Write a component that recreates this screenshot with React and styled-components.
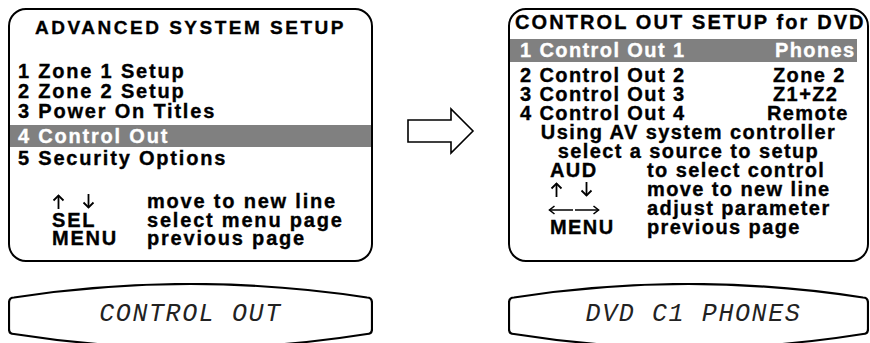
import React from "react";
import styled, { createGlobalStyle } from "styled-components";

const GlobalStyle = createGlobalStyle`
  html, body {
    margin: 0;
    padding: 0;
    background: #fff;
    overflow: hidden;
  }
  body {
    font-family: "Liberation Sans", Arial, sans-serif;
  }
`;

const Page = styled.div`
  display: grid;
  grid-template-columns: 365px 135px 361px;
  grid-template-rows: 254px 66px;
  row-gap: 21px;
  padding: 8px 0 0 8px;
  width: 870px;
  box-sizing: border-box;
`;

const Screen = styled.div`
  box-sizing: border-box;
  height: 254px;
  border: 2px solid #000;
  border-radius: 18px;
  padding-top: ${({ $top }) => $top}px;
  display: flex;
  flex-direction: column;
  font-size: 20px;
  font-weight: bold;
  color: #000;
  letter-spacing: ${({ $spacing }) => $spacing}px;
  -webkit-text-stroke: 0.35px currentColor;
  white-space: nowrap;
  overflow: hidden;
`;

const Title = styled.div`
  font-size: ${({ $size }) => $size || 20}px;
  line-height: 20px;
  text-align: ${({ $align }) => $align || "center"};
  padding-left: ${({ $indent }) => $indent || 0}px;
  letter-spacing: ${({ $spacing }) => $spacing}px;
`;

const Menu = styled.div`
  display: flex;
  flex-direction: column;
  margin-top: 23px;
`;

const MenuLine = styled.div`
  padding-left: 8px;
  line-height: ${({ $selected }) => ($selected ? "22px" : "20px")};
  margin: ${({ $selected }) => ($selected ? "3.6px 0 1.5px" : "0")};
  background: ${({ $selected }) => ($selected ? "#808080" : "transparent")};
  color: ${({ $selected }) => ($selected ? "#fff" : "#000")};
`;

const Keys = styled.div`
  display: grid;
  grid-template-columns: ${({ $col }) => $col}px auto;
  grid-auto-rows: ${({ $line }) => $line}px;
  padding-left: ${({ $indent }) => $indent}px;
  margin-top: ${({ $gap }) => $gap}px;
  line-height: ${({ $line }) => $line}px;
`;

const ArrowKeys = styled.span`
  display: flex;
  align-items: ${({ $wide }) => ($wide ? "center" : "flex-start")};
  gap: ${({ $wide }) => ($wide ? "2px" : "17px")};
  padding-top: 2px;
  margin-left: ${({ $shift }) => $shift || 0}px;
  height: 100%;
  box-sizing: border-box;
`;

const OutList = styled.div`
  display: flex;
  flex-direction: column;
  margin-top: 7px;
`;

const OutRow = styled.div`
  display: grid;
  grid-template-columns: 253px auto;
  padding-left: 10px;
  margin-right: ${({ $selected }) => ($selected ? "10px" : "0")};
  margin-bottom: ${({ $selected }) => ($selected ? "4.3px" : "0")};
  line-height: ${({ $selected }) => ($selected ? "23px" : "19px")};
  background: ${({ $selected }) => ($selected ? "#808080" : "transparent")};
  color: ${({ $selected }) => ($selected ? "#fff" : "#000")};
`;

const OutValue = styled.span`
  margin-left: ${({ $shift }) => $shift || 0}px;
`;

const Note = styled.div`
  line-height: 19px;
  text-align: center;
`;

const Middle = styled.div`
  display: flex;
  justify-content: center;
  align-items: flex-start;
  padding-top: 98px;
`;

const Lcd = styled.div`
  position: relative;
  height: 66px;
  display: flex;
  justify-content: center;
  padding-top: 19px;
  padding-left: ${({ $nudge }) => $nudge || 0}px;
  box-sizing: border-box;
`;

const Frame = styled.svg`
  position: absolute;
  left: 0;
  top: 0;
`;

const LcdText = styled.div`
  position: relative;
  font-family: "Liberation Mono", "DejaVu Sans Mono", monospace;
  font-style: italic;
  font-size: 25px;
  line-height: 25px;
  letter-spacing: 1.6px;
  color: #222;
  white-space: pre;
`;

const LcdFrame = ({ width }) => {
  const r = width - 1;
  const mid = width / 2;
  const d = `M1 20 Q1 14.5 6 14.5 Q${mid} -12.5 ${r - 5} 14.5 Q${r} 14.5 ${r} 20
    L${r} 46 Q${r} 51 ${r - 5} 51 Q${mid} 79 6 51 Q1 51 1 46 Z`;
  return (
    <Frame width={width} height="66" viewBox={`0 0 ${width} 66`}>
      <path d={d} fill="none" stroke="#000" strokeWidth="2.2" />
    </Frame>
  );
};

const NextArrow = () => (
  <svg width="72" height="50" viewBox="0 0 72 50">
    <polygon
      points="3,14 46,14 46,3 68,25 46,47 46,36 3,36"
      fill="#fff"
      stroke="#000"
      strokeWidth="1.6"
    />
  </svg>
);

const KeyArrow = ({ dir }) => {
  if (dir === "up" || dir === "down") {
    const up = dir === "up";
    return (
      <svg width="13" height="15" viewBox="0 0 13 15">
        <g fill="none" stroke="#000" strokeWidth="1.8">
          <line x1="6.5" y1={up ? 1.5 : 0} x2="6.5" y2={up ? 15 : 13.5} />
          <polyline points={up ? "1.5,6.5 6.5,1.5 11.5,6.5" : "1.5,8.5 6.5,13.5 11.5,8.5"} />
        </g>
      </svg>
    );
  }
  const left = dir === "left";
  return (
    <svg width="25" height="10" viewBox="0 0 25 10">
      <g fill="none" stroke="#000" strokeWidth="1.6">
        <line x1={left ? 1.5 : 0} y1="5" x2={left ? 25 : 23.5} y2="5" />
        <polyline points={left ? "6.5,1 1.5,5 6.5,9" : "18.5,1 23.5,5 18.5,9"} />
      </g>
    </svg>
  );
};

const systemItems = [
  "1 Zone 1 Setup",
  "2 Zone 2 Setup",
  "3 Power On Titles",
  "4 Control Out",
  "5 Security Options",
];

const outputs = [
  { label: "1 Control Out 1", value: "Phones", shift: 2 },
  { label: "2 Control Out 2", value: "Zone 2" },
  { label: "3 Control Out 3", value: "Z1+Z2" },
  { label: "4 Control Out 4", value: "Remote", shift: -6 },
];

const App = () => {
  return (
    <>
      <GlobalStyle />
      <Page>
        <Screen $top={8.4} $spacing={1.8}>
          <Title $size={19} $spacing={2.5}>ADVANCED SYSTEM SETUP</Title>
          <Menu>
            {systemItems.map((item, i) => (
              <MenuLine key={item} $selected={i === 3}>
                {item}
              </MenuLine>
            ))}
          </Menu>
          <Keys $col={95} $indent={42} $gap={24} $line={18.5}>
            <ArrowKeys>
              <KeyArrow dir="up" />
              <KeyArrow dir="down" />
            </ArrowKeys>
            <span>move to new line</span>
            <span>SEL</span>
            <span>select menu page</span>
            <span>MENU</span>
            <span>previous page</span>
          </Keys>
        </Screen>

        <Middle>
          <NextArrow />
        </Middle>

        <Screen $top={2.1} $spacing={1.4}>
          <Title $align="left" $indent={5} $spacing={2.1}>
            CONTROL OUT SETUP for DVD
          </Title>
          <OutList>
            {outputs.map((row, i) => (
              <OutRow key={row.label} $selected={i === 0}>
                <span>{row.label}</span>
                <OutValue $shift={row.shift}>{row.value}</OutValue>
              </OutRow>
            ))}
          </OutList>
          <Note>Using AV system controller</Note>
          <Note>select a source to setup</Note>
          <Keys $col={97} $indent={40} $gap={0} $line={19}>
            <span>AUD</span>
            <span>to select control</span>
            <ArrowKeys>
              <KeyArrow dir="up" />
              <KeyArrow dir="down" />
            </ArrowKeys>
            <span>move to new line</span>
            <ArrowKeys $wide $shift={-2}>
              <KeyArrow dir="left" />
              <KeyArrow dir="right" />
            </ArrowKeys>
            <span>adjust parameter</span>
            <span>MENU</span>
            <span>previous page</span>
          </Keys>
        </Screen>

        <Lcd>
          <LcdFrame width={365} />
          <LcdText>CONTROL OUT</LcdText>
        </Lcd>
        <div />
        <Lcd $nudge={10}>
          <LcdFrame width={361} />
          <LcdText>DVD C1 PHONES</LcdText>
        </Lcd>
      </Page>
    </>
  );
};

export default App;
